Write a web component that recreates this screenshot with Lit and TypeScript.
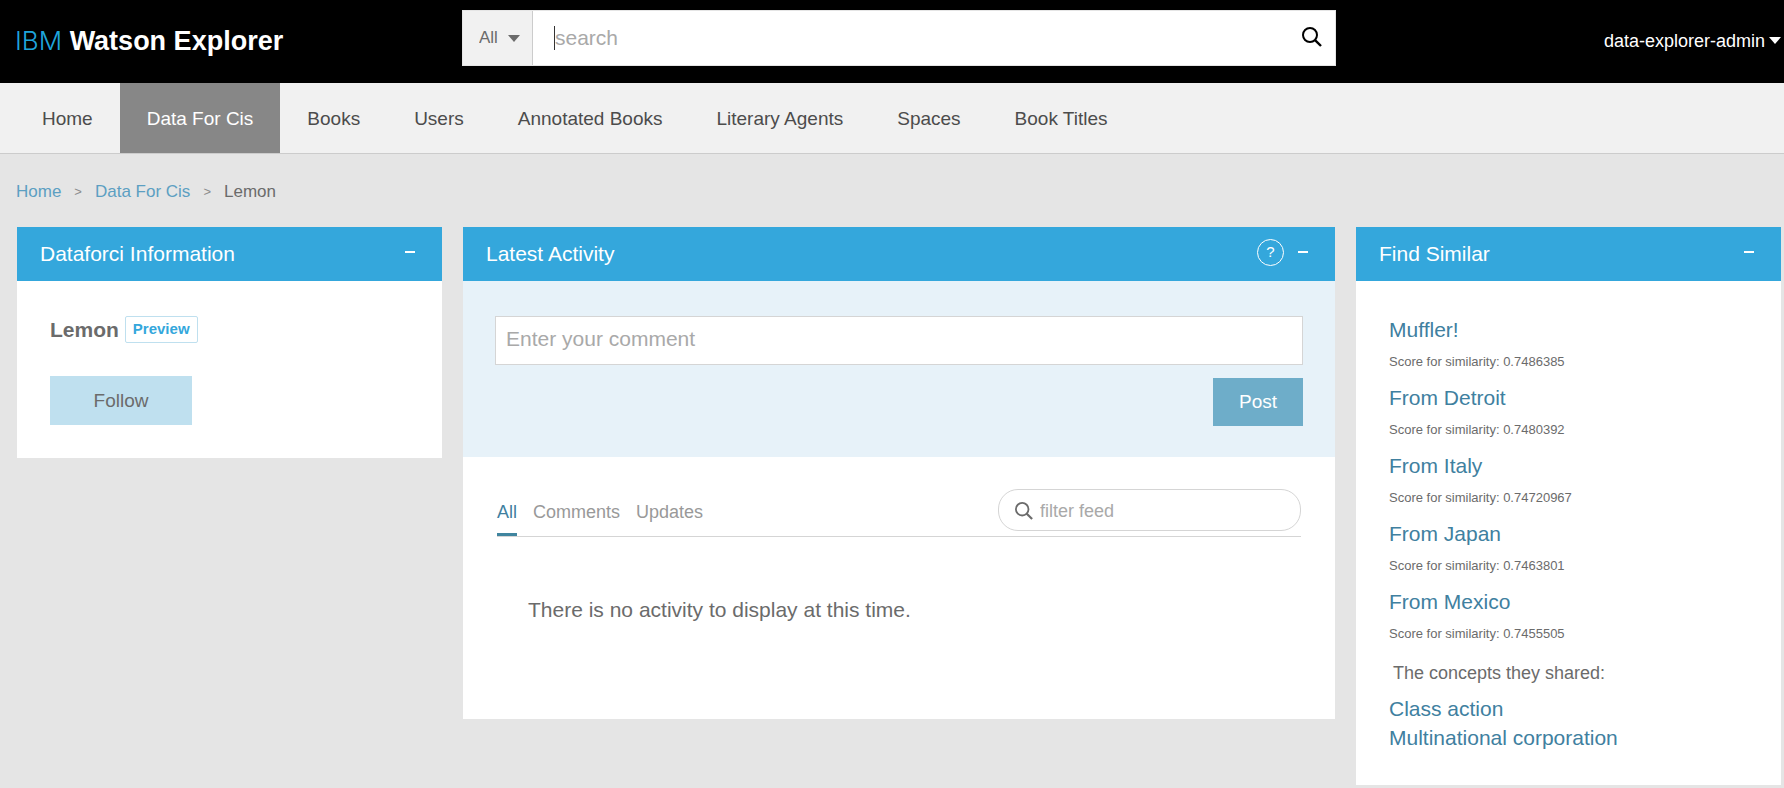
import { LitElement, html, css } from "lit";
import { customElement, property, state } from "lit/decorators.js";
import { classMap } from "lit/directives/class-map.js";

const reset = css`
  *, *::before, *::after { box-sizing: border-box; }
  button, input, select, textarea { font: inherit; margin: 0; border-radius: 0; }
  button { cursor: pointer; border: 0; padding: 0; background: none; color: inherit; }
  a { text-decoration: none; }
  ul { list-style: none; margin: 0; padding: 0; }
  h2, h3, p { margin: 0; }
  svg { display: block; }
`;

const caretIcon = html`<svg class="caret" width="12" height="7" viewBox="0 0 12 7" aria-hidden="true"><path d="M0 0h12L6 7z" fill="currentColor" /></svg>`;

const lensIcon = (size: number) => html`<svg width=${size} height=${size} viewBox="0 0 20 20" fill="none" stroke="currentColor" stroke-width="2" aria-hidden="true"><circle cx="8" cy="8" r="7" /><path d="M12.8 12.8 19 19" stroke-width="2.4" /></svg>`;

@customElement("side-panel")
class SidePanel extends LitElement {
  @property() heading = "";
  @property({ type: Boolean }) help = false;
  @state() private open = true;

  static styles = [
    reset,
    css`
      :host { display: block; background: #fff; }
      .bar {
        display: flex;
        align-items: center;
        justify-content: space-between;
        height: 54px;
        padding: 0 26px 0 23px;
        background: #34a7dc;
        color: #fff;
      }
      .title { font-size: 21px; line-height: 28px; font-weight: 400; }
      .actions { display: flex; align-items: center; gap: 13px; padding-bottom: 4px; }
      .help {
        width: 27px;
        height: 27px;
        border: 1px solid #fff;
        border-radius: 50%;
        font-size: 15px;
        line-height: 24px;
        text-align: center;
      }
      .toggle { display: grid; place-items: center; width: 12px; height: 20px; }
    `,
  ];

  render() {
    return html`
      <div class="bar">
        <h2 class="title">${this.heading}</h2>
        <div class="actions">
          ${this.help ? html`<button class="help" aria-label="Help">?</button>` : ""}
          <button class="toggle" aria-label="Collapse" aria-expanded=${this.open ? "true" : "false"} @click=${() => (this.open = !this.open)}>
            <svg width="10" height="2" viewBox="0 0 10 2" aria-hidden="true"><path d="M0 0h10v2H0z" fill="currentColor" /></svg>
          </button>
        </div>
      </div>
      ${this.open ? html`<slot></slot>` : ""}
    `;
  }
}

const sections = ["Home", "Data For Cis", "Books", "Users", "Annotated Books", "Literary Agents", "Spaces", "Book Titles"];

const similar = [
  { name: "Muffler!", score: "0.7486385" },
  { name: "From Detroit", score: "0.7480392" },
  { name: "From Italy", score: "0.74720967" },
  { name: "From Japan", score: "0.7463801" },
  { name: "From Mexico", score: "0.7455505" },
];

const concepts = ["Class action", "Multinational corporation"];

@customElement("app-root")
class AppRoot extends LitElement {
  @state() private tab = "All";

  static styles = [
    reset,
    css`
      :host {
        display: block;
        min-height: 100vh;
        background: #e5e5e5;
        color: #6b6b6b;
        font-family: "Liberation Sans", Arial, sans-serif;
        font-size: 18px;
      }

      .top {
        display: grid;
        grid-template-columns: 427fr 874fr 425fr;
        gap: 20px;
        height: 83px;
        padding: 0 3px 0 15px;
        background: #000;
        color: #fff;
      }
      .brand {
        align-self: center;
        padding-bottom: 2px;
        color: #fff;
        font-size: 27px;
        line-height: 32px;
        font-weight: 700;
        white-space: nowrap;
      }
      .brand-ibm { font-family: Inter, sans-serif; font-size: 26px; font-weight: 300; color: #1fa5dc; }
      .search {
        display: flex;
        height: 56px;
        margin-top: 10px;
        border: 1px solid #e5e5e5;
        background: #fff;
        color: #6b6b6b;
      }
      .scope {
        display: grid;
        align-items: center;
        width: 70px;
        border-right: 1px solid #ccc;
        background: #f1f1f1;
      }
      .scope-select {
        grid-area: 1 / 1;
        appearance: none;
        width: 100%;
        height: 100%;
        border: 0;
        padding: 0 0 2px 16px;
        background: none;
        color: inherit;
        font-size: 17px;
      }
      .scope .caret { grid-area: 1 / 1; justify-self: end; margin-right: 12px; pointer-events: none; }
      .query { display: flex; flex: 1; align-items: center; padding-left: 21px; }
      .cursor { width: 1px; height: 24px; background: #333; }
      .query-input { flex: 1; min-width: 0; border: 0; padding: 0; outline: 0; background: none; font-size: 21px; }
      ::placeholder { color: #a9a9a9; opacity: 1; }
      .go { padding: 0 13px 2px; color: #000; }
      .user {
        display: flex;
        align-items: center;
        align-self: center;
        justify-self: end;
        gap: 4px;
        padding-bottom: 2px;
        line-height: 24px;
      }

      .nav {
        display: flex;
        height: 71px;
        padding-left: 15px;
        border-bottom: 1px solid #ccc;
        background: #f1f1f1;
      }
      .nav-link {
        display: block;
        padding: 0 27px;
        color: #4c4c4c;
        font-size: 19px;
        line-height: 72px;
        height: 70px;
        white-space: nowrap;
      }
      .nav-link.current { background: #878787; color: #fff; }

      .crumbs {
        display: flex;
        align-items: center;
        gap: 13px;
        padding: 26px 16px 23px;
        font-size: 17px;
        line-height: 24px;
      }
      .crumb { color: #5c9fc2; }
      .crumb-sep { color: #8c8c8c; font-size: 13px; }

      .columns {
        display: grid;
        grid-template-columns: 425fr 872fr 425fr;
        align-items: start;
        gap: 21px;
        padding: 0 3px 3px 17px;
      }

      .info { padding: 35px 33px 33px; }
      .info-name { display: flex; align-items: center; gap: 6px; }
      .name { font-size: 21px; line-height: 27px; }
      .preview {
        height: 27px;
        padding: 0 7px 1px;
        border: 1px solid #bfe0ef;
        border-radius: 2px;
        color: #34a7dc;
        font-size: 15px;
        line-height: 24px;
        font-weight: 700;
      }
      .follow {
        width: 142px;
        height: 49px;
        margin-top: 33px;
        background: #bfe0ef;
        font-size: 19px;
      }

      .compose {
        display: flex;
        flex-direction: column;
        align-items: flex-end;
        gap: 13px;
        padding: 35px 32px 31px;
        background: #e7f2f9;
      }
      .comment {
        display: block;
        width: 100%;
        height: 49px;
        padding: 9px 10px;
        border: 1px solid #d5d5d5;
        background: #fff;
        font-size: 21px;
        line-height: 25px;
        resize: none;
        overflow: hidden;
      }
      .post { width: 90px; height: 48px; background: #6eadc9; color: #fff; font-size: 19px; }

      .feed-bar {
        display: flex;
        align-items: flex-end;
        justify-content: space-between;
        margin: 0 34px;
        padding-top: 32px;
        border-bottom: 1px solid #d5d5d5;
      }
      .tabs { display: flex; gap: 16px; }
      .tab { padding-bottom: 9px; border-bottom: 3px solid transparent; color: #999; line-height: 24px; }
      .tab.chosen { border-color: #40859f; color: #40809f; }
      .filter {
        display: flex;
        align-items: center;
        gap: 7px;
        width: 303px;
        height: 42px;
        margin-bottom: 5px;
        padding: 2px 16px 0;
        border: 1px solid #d5d5d5;
        border-radius: 20px;
      }
      .filter-input { flex: 1; min-width: 0; border: 0; padding: 0; outline: 0; background: none; }
      .empty { padding: 58px 65px 95px; font-size: 21px; line-height: 29px; }

      .similar { padding: 34px 33px 33px; }
      .link { color: #40809f; font-size: 21px; line-height: 29px; }
      .score { margin: 8px 0 11px; font-size: 13px; line-height: 20px; }
      .shared { margin: 16px 0 7px 4px; font-size: 18px; line-height: 27px; font-weight: 400; }
    `,
  ];

  render() {
    return html`
      <header class="top">
        <a class="brand" href="#"><span class="brand-ibm">IBM</span> Watson Explorer</a>
        <form class="search" role="search" @submit=${(e: Event) => e.preventDefault()}>
          <div class="scope">
            <select class="scope-select" aria-label="Search scope"><option>All</option></select>
            ${caretIcon}
          </div>
          <div class="query">
            <span class="cursor"></span>
            <input class="query-input" type="text" placeholder="search" aria-label="Search" />
          </div>
          <button class="go" aria-label="Search">${lensIcon(20)}</button>
        </form>
        <button class="user">data-explorer-admin ${caretIcon}</button>
      </header>

      <nav class="nav" aria-label="Sections">
        ${sections.map(
          (s) => html`<a class=${classMap({ "nav-link": true, current: s === "Data For Cis" })} href="#">${s}</a>`
        )}
      </nav>

      <nav class="crumbs" aria-label="Breadcrumb">
        <a class="crumb" href="#">Home</a>
        <span class="crumb-sep">&gt;</span>
        <a class="crumb" href="#">Data For Cis</a>
        <span class="crumb-sep">&gt;</span>
        <span>Lemon</span>
      </nav>

      <main class="columns">
        <side-panel heading="Dataforci Information">
          <div class="info">
            <div class="info-name">
              <h3 class="name">Lemon</h3>
              <button class="preview">Preview</button>
            </div>
            <button class="follow">Follow</button>
          </div>
        </side-panel>

        <side-panel heading="Latest Activity" help>
          <div class="compose">
            <textarea class="comment" rows="1" placeholder="Enter your comment" aria-label="Comment"></textarea>
            <button class="post">Post</button>
          </div>
          <div class="feed-bar">
            <div class="tabs" role="tablist">
              ${["All", "Comments", "Updates"].map(
                (t) => html`<button
                  class=${classMap({ tab: true, chosen: t === this.tab })}
                  role="tab"
                  aria-selected=${t === this.tab ? "true" : "false"}
                  @click=${() => (this.tab = t)}
                >${t}</button>`
              )}
            </div>
            <label class="filter">
              ${lensIcon(18)}
              <input class="filter-input" type="text" placeholder="filter feed" aria-label="Filter feed" />
            </label>
          </div>
          <p class="empty">There is no activity to display at this time.</p>
        </side-panel>

        <side-panel heading="Find Similar">
          <div class="similar">
            <ul>
              ${similar.map(
                (s) => html`<li>
                  <a class="link" href="#">${s.name}</a>
                  <p class="score">Score for similarity: ${s.score}</p>
                </li>`
              )}
            </ul>
            <h3 class="shared">The concepts they shared:</h3>
            <ul>
              ${concepts.map((c) => html`<li class="link"><a class="link" href="#">${c}</a></li>`)}
            </ul>
          </div>
        </side-panel>
      </main>
    `;
  }
}
